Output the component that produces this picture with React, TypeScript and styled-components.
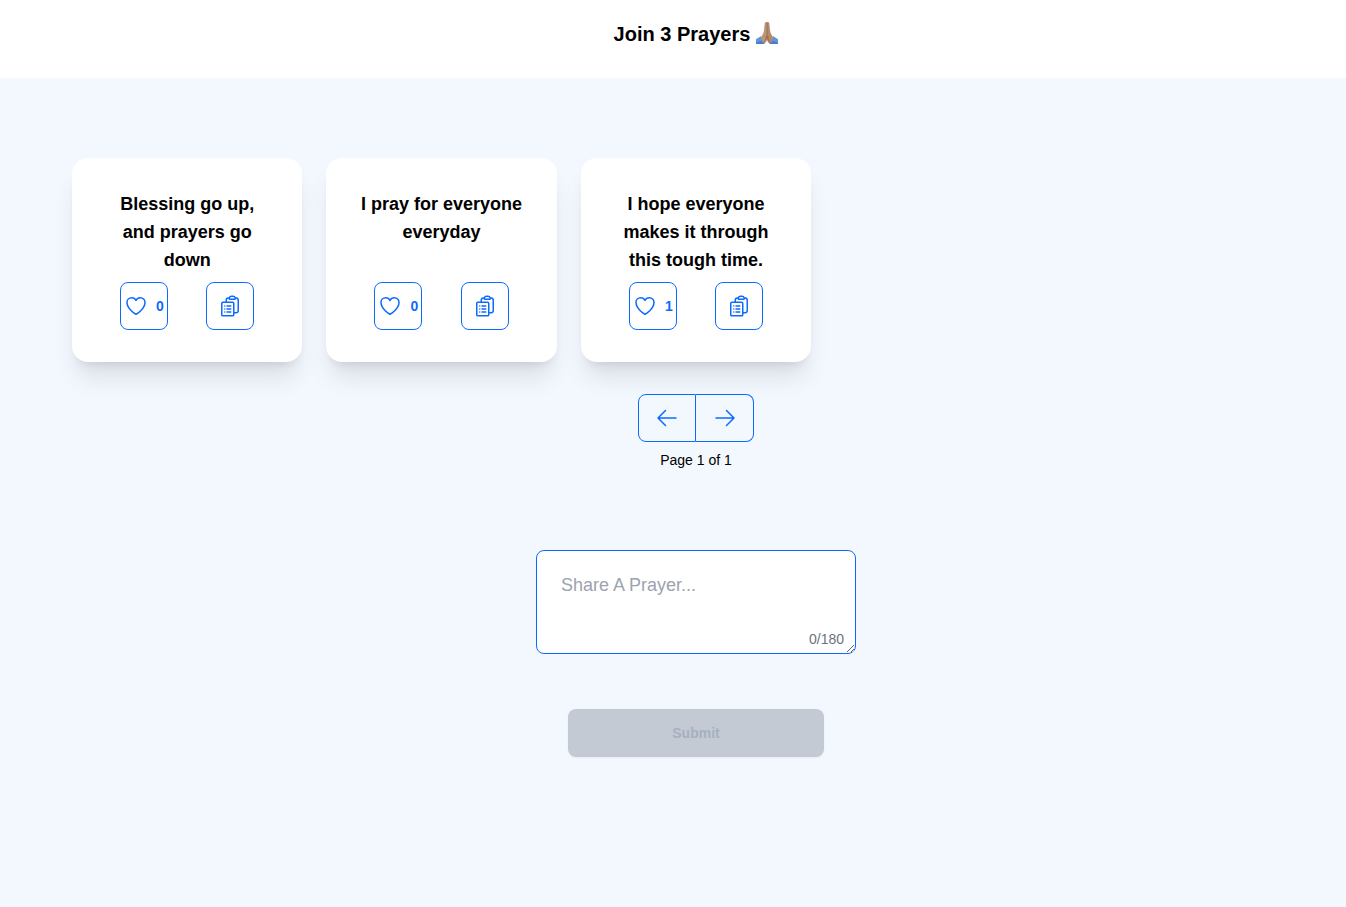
import React, { useState } from 'react';
import styled, { createGlobalStyle } from 'styled-components';
import {
  HiOutlineArrowLeft,
  HiOutlineArrowRight,
  HiOutlineClipboardDocumentList,
  HiOutlineHeart,
} from 'react-icons/hi2';

const BLUE = '#0d6aff';
const MAX_LENGTH = 180;

const GlobalStyle = createGlobalStyle`
  *, *::before, *::after { box-sizing: border-box; }
  body {
    margin: 0;
    background: #f3f8ff;
    color: #000;
    font-family: "Liberation Sans", Arial, sans-serif;
    font-size: 14px;
    line-height: 20px;
  }
  button, textarea { font-family: inherit; }
`;

const Page = styled.div`
  min-height: 100vh;
  display: flex;
  flex-direction: column;
`;

const Header = styled.header`
  display: flex;
  justify-content: center;
  padding: 20px 26px 30px 72px;
  background: #fff;
`;

const Title = styled.h1`
  display: flex;
  align-items: center;
  gap: 6px;
  margin: 0;
  font-size: 20px;
  line-height: 28px;
  font-weight: 700;
`;

const Main = styled.main`
  display: flex;
  flex-direction: column;
  align-items: center;
  padding: 80px 26px 80px 72px;
`;

const CardGrid = styled.ul`
  align-self: stretch;
  display: grid;
  grid-template-columns: repeat(5, minmax(0, 1fr));
  gap: 24px;
  margin: 0;
  padding: 0;
  list-style: none;
`;

const Card = styled.li`
  display: flex;
  flex-direction: column;
  gap: 8px;
  padding: 32px;
  border-radius: 16px;
  background: #fff;
  box-shadow: 0 20px 25px -5px rgba(0, 0, 0, 0.1), 0 8px 10px -6px rgba(0, 0, 0, 0.1);
`;

const CardText = styled.h2`
  flex: 1;
  margin: 0;
  font-size: 18px;
  line-height: 28px;
  font-weight: 700;
  text-align: center;
`;

const CardActions = styled.div`
  display: flex;
  justify-content: space-between;
  padding: 0 16px;
`;

const OutlineButton = styled.button`
  display: flex;
  align-items: center;
  justify-content: center;
  gap: 8px;
  width: 48px;
  height: 48px;
  padding: 0;
  border: 1px solid ${BLUE};
  border-radius: 8px;
  background: transparent;
  color: ${BLUE};
  font-size: 14px;
  font-weight: 700;
  cursor: pointer;

  svg { flex: none; }
`;

const Pager = styled.nav`
  display: flex;
  margin-top: 32px;
`;

const PagerButton = styled(OutlineButton)<{ $side: 'left' | 'right' }>`
  width: 58px;
  ${({ $side }) =>
    $side === 'left'
      ? 'border-radius: 8px 0 0 8px;'
      : 'border-left: 0; border-radius: 0 8px 8px 0;'}
`;

const PageLabel = styled.p`
  margin: 8px 0 80px;
`;

const Form = styled.form`
  display: flex;
  flex-direction: column;
  align-items: center;
  gap: 55px;
`;

const Field = styled.div`
  position: relative;
  display: flex;
`;

const PrayerInput = styled.textarea`
  width: 320px;
  height: 104px;
  padding: 20px 24px;
  border: 1px solid ${BLUE};
  border-radius: 8px;
  outline: none;
  background: #fff;
  font-size: 18px;
  line-height: 28px;

  &::placeholder { color: #9ca3af; opacity: 1; }
`;

const Counter = styled.span`
  position: absolute;
  right: 12px;
  bottom: 5px;
  color: #6b7280;
`;

const SubmitButton = styled.button`
  width: 256px;
  height: 48px;
  border: 0;
  border-radius: 8px;
  background: ${BLUE};
  color: #fff;
  font-size: 14px;
  font-weight: 700;
  box-shadow: 0 1px 2px rgba(0, 0, 0, 0.05);

  &:disabled { background: #c4cad4; color: #a6b0c0; }
`;

const FoldedHands = () => (
  <svg width="22" height="24" viewBox="0 0 66 72" role="img" aria-label="Folded hands">
    <path d="M0 52 L14 43 L21 48 L28 58 L25 66 L0 66 Z" fill="#6196dd" />
    <path d="M66 52 L52 43 L45 48 L38 58 L41 66 L66 66 Z" fill="#6196dd" />
    <path d="M0 62 L16 56 L25 66 L0 66 Z" fill="#4a7dc6" />
    <path d="M66 62 L50 56 L41 66 L66 66 Z" fill="#4a7dc6" />
    <path
      d="M33 0 C28 0 26 2 26 6 L24 25 C23 33 20 38 16 44 L15 51 L25 65 C30 61 32 57 33 54 Z"
      fill="#bd9475"
    />
    <path
      d="M33 0 C38 0 40 2 40 6 L42 25 C43 33 46 38 50 44 L51 51 L41 65 C36 61 34 57 33 54 Z"
      fill="#b68a6a"
    />
    <path d="M33 2 V53" stroke="#8e654b" strokeWidth="2" fill="none" />
    <path d="M31 42 C30 51 28 56 24 61 M35 42 C36 51 38 56 42 61" stroke="#8a6048" strokeWidth="2" fill="none" />
  </svg>
);

const initialPrayers = [
  { id: 1, text: 'Blessing go up, and prayers go down', likes: 0 },
  { id: 2, text: 'I pray for everyone everyday', likes: 0 },
  { id: 3, text: 'I hope everyone makes it through this tough time.', likes: 1 },
];

export default function App() {
  const [prayers, setPrayers] = useState(initialPrayers);
  const [draft, setDraft] = useState('');

  const like = (id: number) =>
    setPrayers((list) => list.map((p) => (p.id === id ? { ...p, likes: p.likes + 1 } : p)));

  const submit = (event: React.FormEvent) => {
    event.preventDefault();
    setPrayers((list) => [...list, { id: list.length + 1, text: draft.trim(), likes: 0 }]);
    setDraft('');
  };

  return (
    <Page>
      <GlobalStyle />
      <Header>
        <Title>
          Join {prayers.length} Prayers <FoldedHands />
        </Title>
      </Header>
      <Main>
        <CardGrid>
          {prayers.map((prayer) => (
            <Card key={prayer.id}>
              <CardText>{prayer.text}</CardText>
              <CardActions>
                <OutlineButton type="button" aria-label={`Like, ${prayer.likes}`} onClick={() => like(prayer.id)}>
                  <HiOutlineHeart size={24} />
                  {prayer.likes}
                </OutlineButton>
                <OutlineButton
                  type="button"
                  aria-label="Copy prayer"
                  onClick={() => navigator.clipboard?.writeText(prayer.text)}
                >
                  <HiOutlineClipboardDocumentList size={24} />
                </OutlineButton>
              </CardActions>
            </Card>
          ))}
        </CardGrid>
        <Pager aria-label="Pages">
          <PagerButton type="button" $side="left" aria-label="Previous page">
            <HiOutlineArrowLeft size={24} />
          </PagerButton>
          <PagerButton type="button" $side="right" aria-label="Next page">
            <HiOutlineArrowRight size={24} />
          </PagerButton>
        </Pager>
        <PageLabel>Page 1 of 1</PageLabel>
        <Form onSubmit={submit}>
          <Field>
            <PrayerInput
              aria-label="Share a prayer"
              placeholder="Share A Prayer..."
              maxLength={MAX_LENGTH}
              value={draft}
              onChange={(event) => setDraft(event.target.value)}
            />
            <Counter>
              {draft.length}/{MAX_LENGTH}
            </Counter>
          </Field>
          <SubmitButton type="submit" disabled={draft.trim() === ''}>
            Submit
          </SubmitButton>
        </Form>
      </Main>
    </Page>
  );
}
